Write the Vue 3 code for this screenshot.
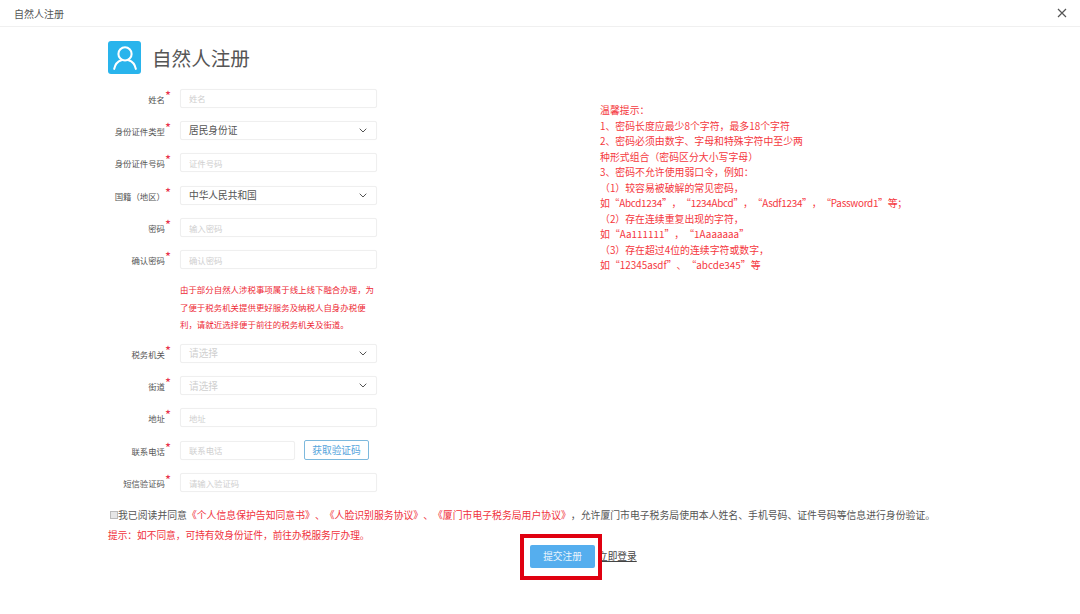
<script setup>
const firstRows = [
  { label: '姓名', placeholder: '姓名' },
  { label: '身份证件类型', value: '居民身份证', select: true },
  { label: '身份证件号码', placeholder: '证件号码' },
  { label: '国籍（地区）', value: '中华人民共和国', select: true },
  { label: '密码', placeholder: '输入密码' },
  { label: '确认密码', placeholder: '确认密码' }
]
const secondRows = [
  { label: '税务机关', placeholder: '请选择', select: true },
  { label: '街道', placeholder: '请选择', select: true },
  { label: '地址', placeholder: '地址' },
  { label: '联系电话', placeholder: '联系电话', code: true },
  { label: '短信验证码', placeholder: '请输入验证码' }
]
const noticeLines = [
  '由于部分自然人涉税事项属于线上线下融合办理，为',
  '了便于税务机关提供更好服务及纳税人自身办税便',
  '利，请就近选择便于前往的税务机关及街道。'
]
const tips = [
  '温馨提示：',
  '1、密码长度应最少8个字符，最多18个字符',
  '2、密码必须由数字、字母和特殊字符中至少两',
  '种形式组合（密码区分大小写字母）',
  '3、密码不允许使用弱口令，例如：',
  '（1）较容易被破解的常见密码，',
  '如“Abcd1234”，“1234Abcd”，“Asdf1234”，“Password1”等；',
  '（2）存在连续重复出现的字符，',
  '如“Aa111111”，“1Aaaaaaa”',
  '（3）存在超过4位的连续字符或数字，',
  '如“12345asdf”、“abcde345”等'
]
</script>

<template>
  <div class="page">
    <header class="topbar">
      <span class="topbar-title">自然人注册</span>
      <svg class="close" viewBox="0 0 10 10" width="10" height="10">
        <path d="M1 1 L9 9 M9 1 L1 9" stroke="#555" stroke-width="1.2" fill="none" />
      </svg>
    </header>

    <main class="content">
      <div class="columns">
        <section class="form-col">
          <div class="heading">
            <div class="logo">
              <svg viewBox="0 0 32 32" width="32" height="32">
                <circle cx="16.5" cy="12.5" r="6.4" fill="none" stroke="#fff" stroke-width="2" />
                <path d="M6 27 C7 22 10 19.5 13 18.6 M27 27 C26 22 23 19.5 20 18.6" fill="none" stroke="#fff" stroke-width="2" stroke-linecap="round" />
              </svg>
            </div>
            <h1 class="heading-text">自然人注册</h1>
          </div>

          <div class="rows rows-first">
            <div v-for="row in firstRows" :key="row.label" class="row">
              <label class="label">{{ row.label }}<i class="star">*</i></label>
              <div v-if="row.select" class="field select">
                <span class="value">{{ row.value }}</span>
                <svg class="chev" viewBox="0 0 8 5" width="8" height="5"><path d="M0.7 0.7 L4 4 L7.3 0.7" fill="none" stroke="#555" stroke-width="1" /></svg>
              </div>
              <input v-else class="field input" :placeholder="row.placeholder" />
            </div>
          </div>

          <div class="notice">
            <div v-for="line in noticeLines" :key="line">{{ line }}</div>
          </div>

          <div class="rows">
            <div v-for="row in secondRows" :key="row.label" class="row">
              <label class="label">{{ row.label }}<i class="star">*</i></label>
              <div v-if="row.select" class="field select">
                <span class="ph-large">{{ row.placeholder }}</span>
                <svg class="chev" viewBox="0 0 8 5" width="8" height="5"><path d="M0.7 0.7 L4 4 L7.3 0.7" fill="none" stroke="#555" stroke-width="1" /></svg>
              </div>
              <template v-else-if="row.code">
                <input class="field input short" :placeholder="row.placeholder" />
                <button class="code-btn" type="button">获取验证码</button>
              </template>
              <input v-else class="field input" :placeholder="row.placeholder" />
            </div>
          </div>
        </section>

        <aside class="tips">
          <div v-for="line in tips" :key="line" :class="{ tight: line.includes('Password') }">{{ line }}</div>
        </aside>
      </div>

      <p class="agree">
        <span class="check"></span><span>我已阅读并同意</span><span class="red">《个人信息保护告知同意书》、《人脸识别服务协议》、《厦门市电子税务局用户协议》</span><span>，允许厦门市电子税务局使用本人姓名、手机号码、证件号码等信息进行身份验证。</span>
      </p>
      <p class="hint">提示：如不同意，可持有效身份证件，前往办税服务厅办理。</p>

      <div class="actions">
        <div class="submit-wrap">
          <button class="submit" type="button">提交注册</button>
          <div class="mark"></div>
        </div>
        <a class="login">立即登录</a>
      </div>
    </main>
  </div>
</template>

<style scoped>
.page {
  width: 1080px;
  height: 614px;
  overflow: hidden;
  background: #fff;
  font-family: "Noto Sans CJK SC", "Liberation Sans", sans-serif;
  color: #555;
  text-spacing-trim: space-all;
}
.topbar {
  height: 26px;
  border-bottom: 1px solid #f0f0f0;
  display: flex;
  align-items: center;
  justify-content: space-between;
  padding: 0 13px 0 14px;
}
.topbar-title {
  font-size: 10px;
  color: #555;
}
.close {
  display: block;
}
.content {
  padding: 14px 0 0 108px;
}
.columns {
  display: flex;
}
.form-col {
  width: 492px;
  flex: none;
}
.heading {
  display: flex;
  align-items: center;
  gap: 11px;
  height: 33px;
}
.logo {
  width: 33px;
  height: 33px;
  border-radius: 3px;
  background: #29b4ec;
}
.logo svg {
  display: block;
  width: 33px;
  height: 33px;
}
.heading-text {
  margin: 0;
  font-size: 19.6px;
  font-weight: 400;
  line-height: 33px;
  color: #555;
}
.rows {
  display: flex;
  flex-direction: column;
  gap: 13.4px;
}
.rows-first {
  margin-top: 14.5px;
}
.row {
  display: flex;
  align-items: center;
  height: 19px;
}
.label {
  width: 63px;
  margin-right: 9px;
  flex: none;
  text-align: right;
  font-size: 8.4px;
  line-height: 12px;
  padding-top: 0;
  color: #555;
  white-space: nowrap;
}
.star {
  display: inline-block;
  width: 6px;
  font-style: normal;
  font-size: 13px;
  line-height: 8px;
  color: #e8304a;
  text-align: center;
  vertical-align: 2px;
}
.field {
  box-sizing: border-box;
  width: 197px;
  height: 19px;
  border: 1px solid #efefef;
  border-radius: 2px;
  background: #fff;
  box-shadow: 0 0 1px rgba(0, 0, 0, 0.04);
}
.input {
  padding: 0 8px;
  font-family: inherit;
  font-size: 8.4px;
  outline: none;
}
.input::placeholder {
  color: #cfcfcf;
}
.short {
  width: 115px;
}
.select {
  display: flex;
  align-items: center;
  justify-content: space-between;
  padding: 0 9px 0 8px;
}
.value {
  font-size: 9.7px;
  color: #555;
}
.ph-large {
  font-size: 9.7px;
  color: #cfcfcf;
}
.chev {
  display: block;
}
.code-btn {
  box-sizing: border-box;
  width: 65px;
  height: 20px;
  margin-left: 9px;
  padding: 0;
  border: 1px solid #7db9dd;
  border-radius: 2px;
  background: #fff;
  color: #55a5dc;
  font-family: inherit;
  font-size: 9.7px;
}
.notice {
  margin: 12px 0 10px 72px;
  font-size: 8.45px;
  line-height: 17.4px;
  color: #ee2a36;
  white-space: nowrap;
}
.tips {
  padding-top: 62px;
  font-size: 9.9px;
  line-height: 15.5px;
  color: #f5383e;
  white-space: nowrap;
}
.tight {
  letter-spacing: -0.28px;
}
.agree {
  display: flex;
  align-items: center;
  margin: 15.5px 0 0 2px;
  font-size: 9.85px;
  line-height: 14px;
  color: #555;
  white-space: nowrap;
}
.check {
  box-sizing: border-box;
  width: 8px;
  height: 8px;
  border: 1px solid #bbb;
  background: #e6e6e6;
  flex: none;
}
.red {
  color: #f0323c;
}
.hint {
  margin: 6px 0 0;
  font-size: 9.7px;
  line-height: 14px;
  color: #f0323c;
}
.actions {
  display: flex;
  align-items: center;
  margin: 3px 0 0 422px;
}
.submit-wrap {
  position: relative;
}
.submit {
  display: block;
  width: 65px;
  height: 23px;
  padding: 0;
  border: 0;
  border-radius: 2px;
  background: #55aeee;
  color: #e8f4fd;
  font-family: inherit;
  font-size: 9.7px;
}
.mark {
  position: absolute;
  left: -10px;
  top: -11px;
  width: 82px;
  height: 46px;
  box-sizing: border-box;
  border: 4px solid #e00010;
  pointer-events: none;
}
.login {
  margin-left: 3px;
  font-size: 9.7px;
  line-height: 14px;
  color: #444;
  text-decoration: underline;
}
</style>
